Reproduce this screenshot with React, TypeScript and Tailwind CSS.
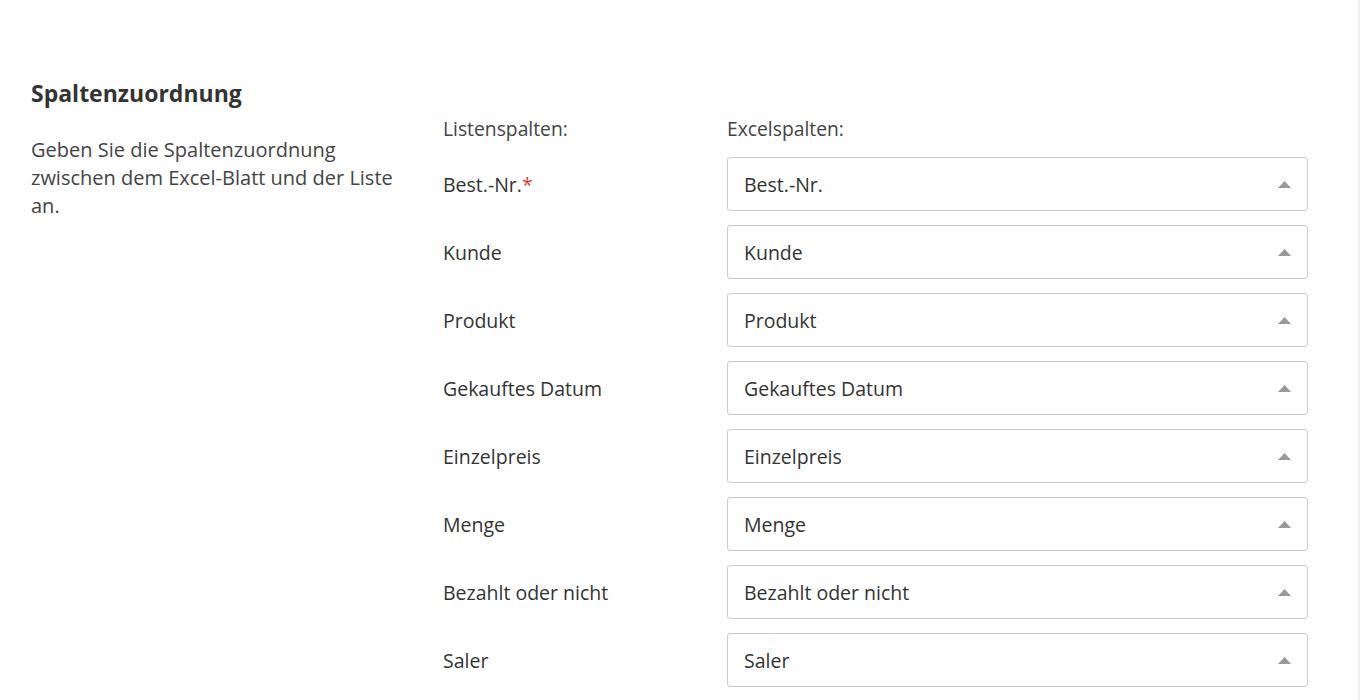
import React from 'react';

const rows = [
  { label: 'Best.-Nr.', required: true },
  { label: 'Kunde' },
  { label: 'Produkt' },
  { label: 'Gekauftes Datum' },
  { label: 'Einzelpreis' },
  { label: 'Menge' },
  { label: 'Bezahlt oder nicht' },
  { label: 'Saler' },
];

const Caret = () => (
  <svg width="13" height="7" viewBox="0 0 13 7" className="shrink-0">
    <path d="M0 7 L6.5 0 L13 7 Z" fill="#999999" />
  </svg>
);

const App: React.FC = () => {
  return (
    <div
      className="h-[700px] w-[1360px] overflow-hidden bg-white text-[#333333]"
      style={{ fontFamily: '"Open Sans", "Noto Sans", sans-serif' }}
    >
      <div className="flex h-full border-r-2 border-[#f0f0f0]">
        {/* Left description */}
        <div className="w-[443px] shrink-0 pl-[31px] pt-[77px]">
          <h2 className="text-[23px] font-bold leading-[32px] text-[#333333]">Spaltenzuordnung</h2>
          <p className="mt-[27px] w-[380px] text-[20px] leading-[28px] text-[#444444]">
            Geben Sie die Spaltenzuordnung zwischen dem Excel-Blatt und der Liste an.
          </p>
        </div>

        {/* Mapping table */}
        <div className="flex-1 pt-[115px] pr-[50px]">
          <div className="flex text-[19.3px] leading-[28px] text-[#444444]">
            <div className="w-[284px]">Listenspalten:</div>
            <div>Excelspalten:</div>
          </div>
          <div className="mt-[14px] flex flex-col gap-[14px]">
            {rows.map((r) => (
              <div key={r.label} className="flex items-center">
                <div className="w-[284px] pt-[2px] text-[19.5px] text-[#333333]">
                  {r.label}
                  {r.required && <span className="text-[#e53935]">*</span>}
                </div>
                <div className="flex h-[54px] w-[581px] items-center justify-between rounded-[3px] border border-[#cccccc] pl-[16px] pr-[16px] text-[19.5px] text-[#333333]">
                  <span className="pt-[2px]">{r.label}</span>
                  <Caret />
                </div>
              </div>
            ))}
          </div>
        </div>
      </div>
    </div>
  );
};

export default App;
